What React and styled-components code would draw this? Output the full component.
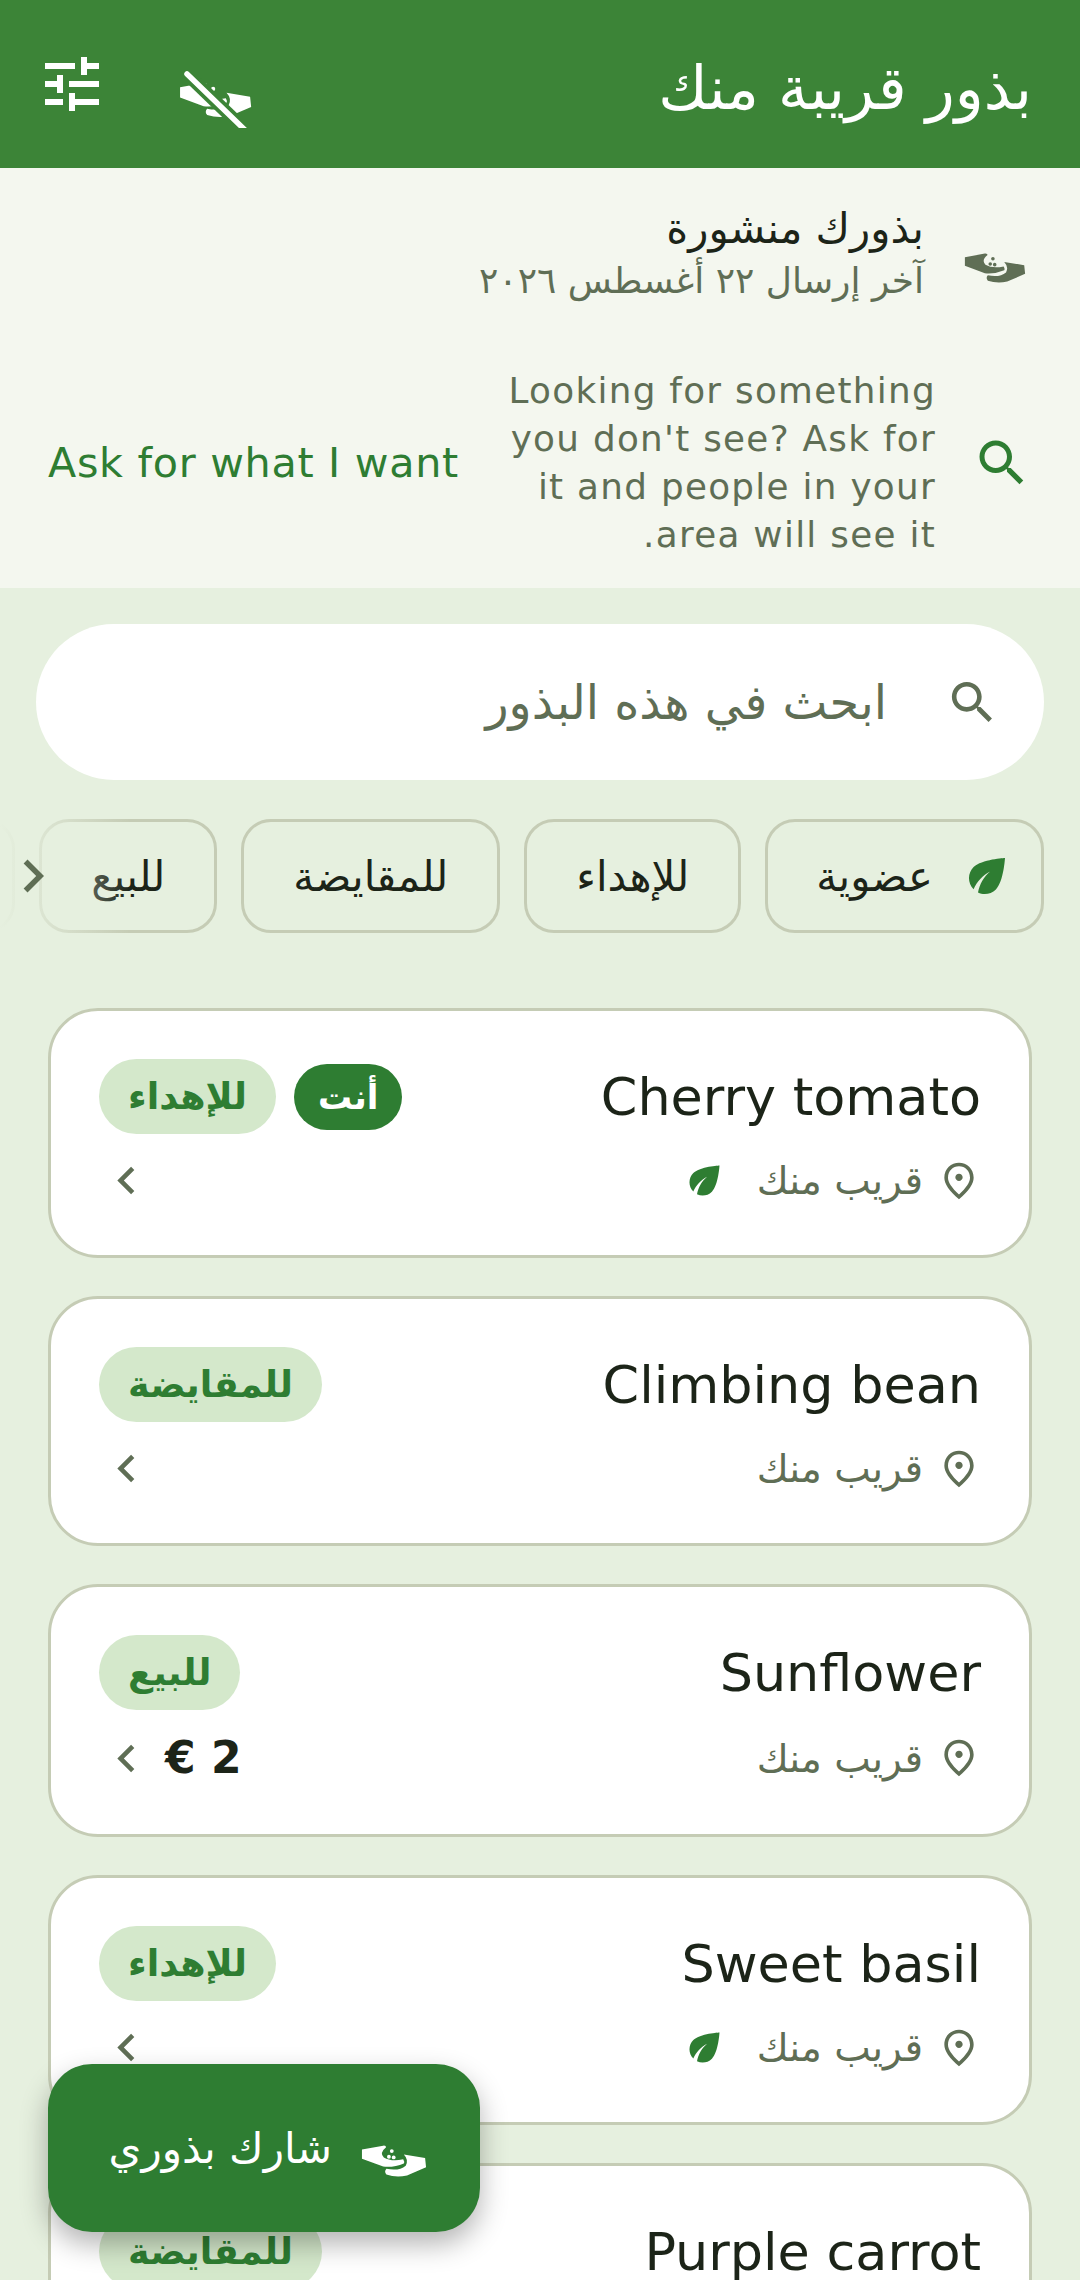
import styled, { createGlobalStyle } from 'styled-components';

const SEEDS = [
  { id: 1, name: 'Cherry tomato', tag: 'للإهداء', mine: true, organic: true },
  { id: 2, name: 'Climbing bean', tag: 'للمقايضة' },
  { id: 3, name: 'Sunflower', tag: 'للبيع', price: '2 €' },
  { id: 4, name: 'Sweet basil', tag: 'للإهداء', organic: true },
  { id: 5, name: 'Purple carrot', tag: 'للمقايضة' },
];

const FILTERS = [
  { id: 'organic', label: 'عضوية', leaf: true },
  { id: 'gift', label: 'للإهداء' },
  { id: 'swap', label: 'للمقايضة' },
  { id: 'sale', label: 'للبيع' },
  { id: 'more', label: '' },
];

const PATHS = {
  tune: 'M3 17v2h6v-2H3zM3 5v2h10V5H3zm10 16v-2h8v-2h-8v-2h-2v6h2zM7 9v2H3v2h4v2h2V9H7zm14 4v-2H11v2h10zm-6-4h2V7h4V5h-4V3h-2v6z',
  search: 'M15.5 14h-.79l-.28-.27C15.41 12.59 16 11.11 16 9.5 16 5.91 13.09 3 9.5 3S3 5.91 3 9.5 5.91 16 9.5 16c1.61 0 3.09-.59 4.23-1.57l.27.28v.79l5 4.99L20.49 19l-4.99-5zm-6 0C7.01 14 5 11.99 5 9.5S7.01 5 9.5 5 14 7.01 14 9.5 11.99 14 9.5 14z',
  leaf: 'M6.05 8.05c-2.73 2.73-2.73 7.15-.02 9.88 1.47-3.4 4.09-6.24 7.36-7.93-2.77 2.34-4.71 5.61-5.39 9.32 2.6 1.23 5.8.78 7.95-1.37C19.43 14.47 20 4 20 4S9.53 4.57 6.05 8.05z',
  pin: 'M12 12c-1.1 0-2-.9-2-2s.9-2 2-2 2 .9 2 2-.9 2-2 2zm6-1.8C18 6.57 15.35 4 12 4s-6 2.57-6 6.2c0 2.34 1.95 5.44 6 9.14 4.05-3.7 6-6.8 6-9.14zM12 2c4.2 0 8 3.22 8 8.2 0 3.32-2.67 7.25-8 11.8-5.33-4.55-8-8.48-8-11.8C4 5.22 7.8 2 12 2z',
  chevronLeft: 'M15.41 7.41L14 6l-6 6 6 6 1.41-1.41L10.83 12z',
  chevronRight: 'M10 6L8.59 7.41 13.17 12l-4.58 4.59L10 18l6-6z',
};

const Icon = ({ name, size, color }) => (
  <IconSvg viewBox="0 0 24 24" width={size} height={size} fill={color}>
    <path d={PATHS[name]} />
  </IconSvg>
);

const HandShapes = ({ color }) => (
  <g fill={color}>
    <path d="M58 97 L125 85 Q134 84 134 90 Q112 108 127 122 Q150 136 188 128 Q193 136 190 141 Q160 154 125 151 L58 126 Z" />
    <path d="M190 113 L257 124 L260 153 L200 179 Q165 186 135 176 Q127 167 135 158 Q175 166 196 148 Q206 130 190 113 Z" />
    <circle cx="152" cy="102" r="6" />
    <circle cx="143" cy="120" r="6" />
    <circle cx="158" cy="122" r="6" />
  </g>
);

const HandsIcon = ({ width, color }) => (
  <HandsSvg viewBox="55 83 208 104" width={width} height={width * 104 / 208}>
    <HandShapes color={color} />
  </HandsSvg>
);

const HandsOffIcon = () => (
  <OffSvg viewBox="176 70 80 58" width="80" height="58">
    <g transform="translate(179 83) scale(0.352) translate(-55 -85)">
      <HandShapes color="#ffffff" />
    </g>
    <path d="M187 74 L245 130" stroke="#3c8437" strokeWidth="13" />
    <path d="M187 74 L245 130" stroke="#ffffff" strokeWidth="5.5" strokeLinecap="round" />
  </OffSvg>
);

export default function App() {
  return (
    <Page>
      <GlobalStyle />
      <Header>
        <HeaderTitle>بذور قريبة منك</HeaderTitle>
        <HeaderActions>
          <HandsOffIcon />
          <Icon name="tune" size={72} color="#ffffff" />
        </HeaderActions>
      </Header>

      <Banner>
        <PublishedRow>
          <HandsIcon width={62} color="#5f6e55" />
          <div>
            <PublishedTitle>بذورك منشورة</PublishedTitle>
            <PublishedDate>آخر إرسال ٢٢ أغسطس ٢٠٢٦</PublishedDate>
          </div>
        </PublishedRow>
        <AskRow>
          <Icon name="search" size={60} color="#2e7d32" />
          <AskText>Looking for something you don't see? Ask for it and people in your area will see it.</AskText>
          <AskLink>Ask for what I want</AskLink>
        </AskRow>
      </Banner>

      <SearchBar>
        <Icon name="search" size={55} color="#5f6e55" />
        <SearchText>ابحث في هذه البذور</SearchText>
      </SearchBar>

      <FilterBar>
        {FILTERS.map((filter) => (
          <FilterChip key={filter.id} $leaf={filter.leaf}>
            {filter.leaf && <Icon name="leaf" size={54} color="#2e7d32" />}
            {filter.label}
          </FilterChip>
        ))}
        <FilterFade />
        <ScrollHint>
          <Icon name="chevronRight" size={66} color="#5f6e55" />
        </ScrollHint>
      </FilterBar>

      <SeedList>
        {SEEDS.map((seed) => (
          <SeedCard key={seed.id}>
            <CardTop>
              <SeedName>{seed.name}</SeedName>
              <Badges>
                {seed.mine && <MineBadge>أنت</MineBadge>}
                <TagBadge>{seed.tag}</TagBadge>
              </Badges>
            </CardTop>
            <CardBottom>
              <Distance>
                <Icon name="pin" size={44} color="#5f6e55" />
                <DistanceText>قريب منك</DistanceText>
                {seed.organic && <Icon name="leaf" size={45} color="#2e7d32" />}
              </Distance>
              <Trailing>
                {seed.price && <Price>{seed.price}</Price>}
                <Icon name="chevronLeft" size={55} color="#5f6e55" />
              </Trailing>
            </CardBottom>
          </SeedCard>
        ))}
      </SeedList>

      <ShareButton>
        <HandsIcon width={66} color="#ffffff" />
        شارك بذوري
      </ShareButton>
    </Page>
  );
}

const GlobalStyle = createGlobalStyle`
  html, body {
    margin: 0;
    padding: 0;
    background: #e6f0df;
  }
  * {
    box-sizing: border-box;
  }
`;

const IconSvg = styled.svg`
  display: block;
  flex-shrink: 0;
`;

const HandsSvg = styled(IconSvg)`
  margin-top: 26px;
`;

const OffSvg = styled(IconSvg)`
  margin-top: 22px;
`;

const Page = styled.div`
  position: relative;
  width: 1080px;
  height: 2280px;
  overflow: hidden;
  direction: rtl;
  background: #e6f0df;
  font-family: 'DejaVu Sans', sans-serif;
  color: #1c2418;
`;

const Header = styled.header`
  display: flex;
  align-items: center;
  justify-content: space-between;
  height: 168px;
  padding: 0 48px 0 36px;
  background: #3c8437;
`;

const HeaderTitle = styled.h1`
  margin: 8px 0 0;
  font-size: 60px;
  font-weight: 400;
  color: #ffffff;
`;

const HeaderActions = styled.div`
  display: flex;
  align-items: flex-start;
  gap: 68px;
  height: 96px;
  padding-top: 12px;
`;

const Banner = styled.section`
  height: 420px;
  padding-top: 35px;
  background: #f4f7ef;
`;

const PublishedRow = styled.div`
  display: flex;
  align-items: center;
  gap: 40px;
  padding: 0 54px;
`;

const PublishedTitle = styled.div`
  font-size: 41.8px;
  line-height: 52px;
`;

const PublishedDate = styled.div`
  font-size: 36px;
  line-height: 52px;
  color: #5f6e55;
`;

const AskRow = styled.div`
  display: flex;
  align-items: center;
  gap: 36px;
  margin-top: 60px;
  padding: 0 48px;
`;

const AskText = styled.p`
  width: 440px;
  margin: 0;
  font-size: 35.75px;
  line-height: 48px;
  letter-spacing: 1.3px;
  color: #5f6e55;
  flex-shrink: 0;
`;

const AskLink = styled.span`
  margin: 0 auto 0 0;
  font-size: 41.25px;
  letter-spacing: 0.7px;
  white-space: nowrap;
  color: #2e7d32;
`;

const SearchBar = styled.div`
  display: flex;
  align-items: center;
  gap: 58px;
  height: 156px;
  margin: 36px 36px 0;
  padding: 0 44px;
  border-radius: 78px;
  background: #ffffff;
`;

const SearchText = styled.span`
  font-size: 47.8px;
  color: #5f6e55;
`;

const FilterBar = styled.div`
  position: relative;
  display: flex;
  gap: 24px;
  height: 114px;
  margin-top: 39px;
  padding: 0 36px;
  overflow: hidden;
`;

const FilterChip = styled.div`
  display: flex;
  align-items: center;
  flex-shrink: 0;
  gap: 27px;
  min-width: 120px;
  height: 114px;
  padding: ${(p) => (p.$leaf ? '0 27px 0 48px' : '0 49px')};
  border: 3px solid #c5ccb5;
  border-radius: 30px;
  font-size: 41.8px;
  color: #1c2418;
`;

const FilterFade = styled.div`
  position: absolute;
  top: 0;
  bottom: 0;
  left: 0;
  width: 130px;
  background: linear-gradient(to right, #e6f0df, rgba(230, 240, 223, 0));
`;

const ScrollHint = styled.div`
  position: absolute;
  top: 24px;
  left: 0;
`;

const SeedList = styled.div`
  display: flex;
  flex-direction: column;
  gap: 38px;
  margin: 75px 48px 0;
`;

const SeedCard = styled.article`
  padding: 48px 48px 47px;
  border: 3px solid #c5ccb5;
  border-radius: 50px;
  background: #ffffff;
`;

const CardTop = styled.div`
  display: flex;
  align-items: center;
  justify-content: space-between;
  height: 75px;
`;

const SeedName = styled.h2`
  margin: 0;
  font-size: 52.4px;
  font-weight: 400;
  color: #1c2418;
`;

const Badges = styled.div`
  display: flex;
  align-items: center;
  gap: 18px;
`;

const TagBadge = styled.span`
  display: flex;
  align-items: center;
  height: 75px;
  padding: 0 29px;
  border-radius: 38px;
  background: #d4e8cb;
  font-size: 36.5px;
  font-weight: 700;
  color: #2e7d32;
`;

const MineBadge = styled(TagBadge)`
  height: 66px;
  padding: 0 24px;
  background: #2e7d32;
  font-size: 34px;
  color: #ffffff;
`;

const CardBottom = styled.div`
  display: flex;
  align-items: center;
  justify-content: space-between;
  margin-top: 19px;
`;

const Distance = styled.div`
  display: flex;
  align-items: center;
  gap: 14px;
`;

const DistanceText = styled.span`
  margin-left: 16px;
  font-size: 38.8px;
  color: #5f6e55;
`;

const Trailing = styled.div`
  display: flex;
  align-items: center;
  gap: 11px;
`;

const Price = styled.span`
  font-size: 44px;
  line-height: 58px;
  font-weight: 700;
`;

const ShareButton = styled.button`
  position: absolute;
  left: 48px;
  bottom: 48px;
  display: flex;
  align-items: center;
  gap: 29px;
  width: 432px;
  height: 168px;
  padding: 0 53px;
  border: none;
  border-radius: 44px;
  background: #2e7d32;
  box-shadow: 0 12px 28px rgba(0, 0, 0, 0.3);
  font-family: inherit;
  font-size: 42px;
  color: #ffffff;
`;
